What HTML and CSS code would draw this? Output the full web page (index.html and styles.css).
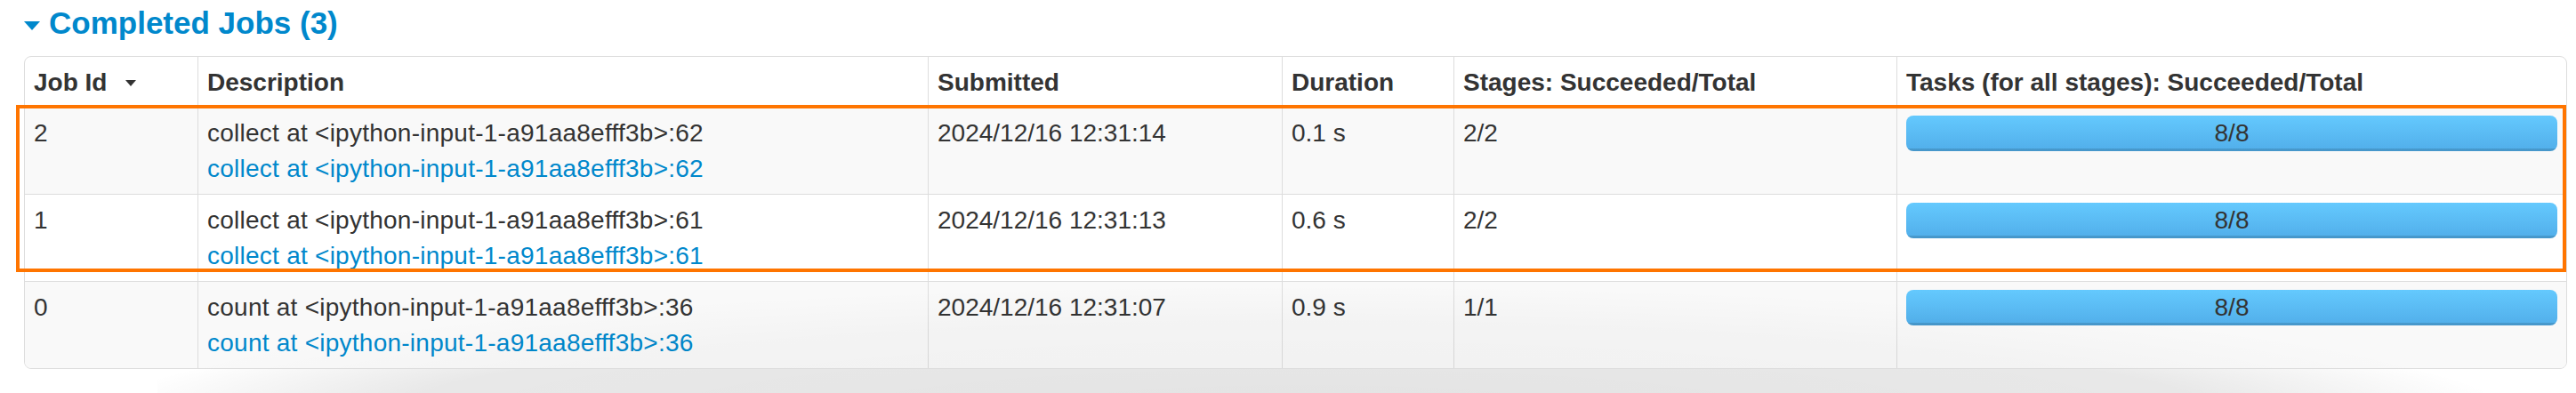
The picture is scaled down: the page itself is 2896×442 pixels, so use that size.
FILE: index.html
```html
<!DOCTYPE html>
<html>
<head>
<meta charset="utf-8">
<link rel="stylesheet" href="styles.css">
</head>
<body>
<div class="page">
  <h4 class="title"><span class="arrow-open"></span><a class="title-link">Completed Jobs (3)</a></h4>
  <div class="table-wrap">
    <table class="jobs">
      <thead>
        <tr>
          <th class="c1">Job Id<span class="sort-arrow"></span></th>
          <th class="c2">Description</th>
          <th class="c3">Submitted</th>
          <th class="c4">Duration</th>
          <th class="c5">Stages: Succeeded/Total</th>
          <th class="c6">Tasks (for all stages): Succeeded/Total</th>
        </tr>
      </thead>
      <tbody>
        <tr class="odd">
          <td>2</td>
          <td class="desc"><div>collect at &lt;ipython-input-1-a91aa8efff3b&gt;:62</div><a class="name-link">collect at &lt;ipython-input-1-a91aa8efff3b&gt;:62</a></td>
          <td>2024/12/16 12:31:14</td>
          <td>0.1 s</td>
          <td>2/2</td>
          <td><div class="progress"><span class="progress-text">8/8</span><div class="bar"></div></div></td>
        </tr>
        <tr>
          <td>1</td>
          <td class="desc"><div>collect at &lt;ipython-input-1-a91aa8efff3b&gt;:61</div><a class="name-link">collect at &lt;ipython-input-1-a91aa8efff3b&gt;:61</a></td>
          <td>2024/12/16 12:31:13</td>
          <td>0.6 s</td>
          <td>2/2</td>
          <td><div class="progress"><span class="progress-text">8/8</span><div class="bar"></div></div></td>
        </tr>
        <tr class="odd last">
          <td>0</td>
          <td class="desc"><div>count at &lt;ipython-input-1-a91aa8efff3b&gt;:36</div><a class="name-link">count at &lt;ipython-input-1-a91aa8efff3b&gt;:36</a></td>
          <td>2024/12/16 12:31:07</td>
          <td>0.9 s</td>
          <td>1/1</td>
          <td><div class="progress"><span class="progress-text">8/8</span><div class="bar"></div></div></td>
        </tr>
      </tbody>
    </table>
    <div class="shade-back"></div>
    <div class="shade-front"></div>
    <div class="highlight"></div>
  </div>
</div>
</body>
</html>
```

FILE: styles.css
```css
html, body {
  margin: 0;
  padding: 0;
  background: #ffffff;
  overflow: hidden;
}

body {
  font-family: "Liberation Sans", Helvetica, Arial, sans-serif;
  font-size: 28px;
  line-height: 40px;
  color: #333333;
}

.page {
  box-sizing: border-box;
  padding: 6px 0 0 27px;
  height: 442px;
  overflow: hidden;
  position: relative;
}

.title {
  margin: 0 0 17px 0;
  height: 40px;
  display: flex;
  align-items: center;
  font-size: 35px;
  font-weight: bold;
  line-height: 40px;
}

.arrow-open {
  width: 0;
  height: 0;
  border-left: 9px solid transparent;
  border-right: 9px solid transparent;
  border-top: 10px solid #0088cc;
  margin: 6px 10px 0 0;
}

.title-link {
  color: #0088cc;
  text-decoration: none;
}

.table-wrap {
  position: relative;
  width: 2859px;
}

.jobs {
  position: relative;
  z-index: 1;
  table-layout: fixed;
  width: 2859px;
  border-collapse: separate;
  border-spacing: 0;
  border: 1px solid #dddddd;
  border-radius: 8px;
  background: #ffffff;
}

.jobs th, .jobs td {
  box-sizing: border-box;
  text-align: left;
  vertical-align: top;
  white-space: nowrap;
  border-left: 1px solid #dddddd;
}

.jobs th:first-child, .jobs td:first-child {
  border-left: 0;
}

.jobs th {
  padding: 9px 10px 7px 10px;
  font-weight: bold;
}

.jobs td {
  padding: 9px 10px 8px 10px;
  border-top: 1px solid #dddddd;
}

.jobs td.desc {
  letter-spacing: 0.25px;
}

.c1 { width: 194px; }
.c2 { width: 821px; }
.c3 { width: 398px; }
.c4 { width: 193px; }
.c5 { width: 498px; }
.c6 { width: 753px; }

.sort-arrow {
  display: inline-block;
  width: 0;
  height: 0;
  border-left: 6.5px solid transparent;
  border-right: 6.5px solid transparent;
  border-top: 7px solid #333333;
  margin-left: 21px;
  vertical-align: 5px;
}

.odd td {
  background: #f9f9f9;
}

.last td:first-child {
  border-bottom-left-radius: 7px;
}

.last td:last-child {
  border-bottom-right-radius: 7px;
}

.name-link {
  color: #0088cc;
  text-decoration: none;
}

.progress {
  position: relative;
  height: 40px;
  border-radius: 8px;
  overflow: hidden;
  background: #f5f5f5;
  letter-spacing: 0;
}

.progress-text {
  position: absolute;
  left: 0;
  top: 0;
  width: 100%;
  text-align: center;
  color: #333333;
  z-index: 1;
}

.bar {
  width: 100%;
  height: 100%;
  background: linear-gradient(to bottom, #64c9fe, #51aeea);
  box-shadow: inset 0 -3px 0 rgba(0, 0, 0, 0.13);
}

.shade-back {
  position: absolute;
  z-index: 0;
  left: 150px;
  top: 300px;
  width: 2700px;
  height: 79px;
  background: radial-gradient(ellipse 1350px 120px at 1290px 97px, rgba(0,0,0,0.11) 0%, rgba(0,0,0,0.09) 75%, rgba(0,0,0,0) 100%);
  pointer-events: none;
}

.shade-front {
  position: absolute;
  z-index: 2;
  left: 150px;
  top: 260px;
  width: 2700px;
  height: 91px;
  background: radial-gradient(ellipse 1350px 140px at 1290px 137px, rgba(0,0,0,0.035) 0%, rgba(0,0,0,0.025) 70%, rgba(0,0,0,0) 100%);
  pointer-events: none;
}

.highlight {
  position: absolute;
  z-index: 3;
  left: -9px;
  top: 55px;
  width: 2867px;
  height: 188px;
  box-sizing: border-box;
  border: 4px solid #ff7500;
  pointer-events: none;
}
```
